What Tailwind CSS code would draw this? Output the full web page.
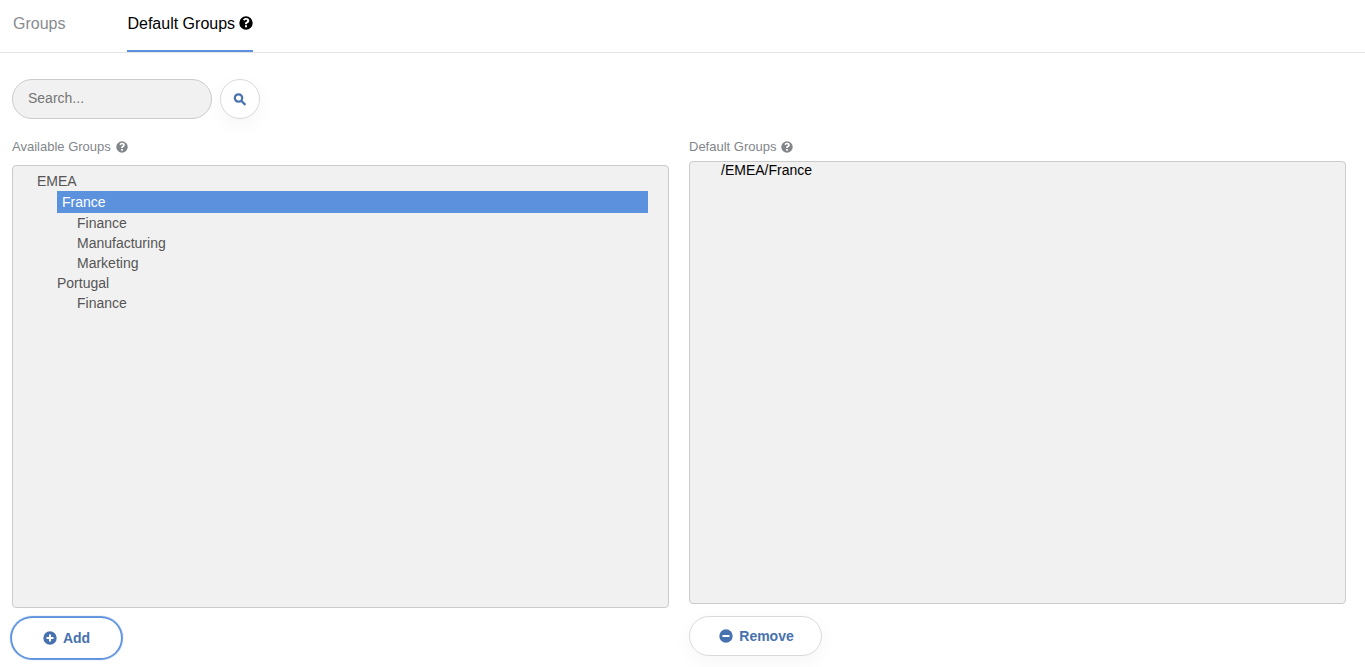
<!DOCTYPE html>
<html lang="en">
<head>
<meta charset="utf-8">
<meta name="viewport" content="width=device-width, initial-scale=1">
<title>Default Groups</title>
<script src="https://cdn.jsdelivr.net/npm/@tailwindcss/browser@4"></script>
</head>
<body class="min-h-screen bg-white font-['Liberation_Sans',Arial,sans-serif] text-sm text-[#555555]">
<svg class="hidden" aria-hidden="true">
  <symbol id="help" viewBox="0 0 14 14"><path fill-rule="evenodd" fill="currentColor" d="M7 .3a6.700 6.700 0 1 0 0 13.400A6.700 6.700 0 0 0 7 .3ZM6 9.300h2v2H6Zm0-1V7.600c0-1 .6-1.400 1.300-1.800.6-.35.9-.6.9-1.050 0-.6-.5-.9-1.150-.9-.75 0-1.150.4-1.600 1L4 3.800C4.700 2.700 5.700 2.100 7.200 2.100c1.700 0 3.100 1.050 3.100 2.650 0 1.300-.8 1.900-1.550 2.350-.5.3-.75.5-.75.9v.3Z"/></symbol>
  <symbol id="plus" viewBox="0 0 14 14"><path fill-rule="evenodd" fill="currentColor" d="M7 .3a6.700 6.700 0 1 0 0 13.400A6.700 6.700 0 0 0 7 .3ZM6 3.500h2V6h2.500v2H8v2.500H6V8H3.500V6H6Z"/></symbol>
  <symbol id="minus" viewBox="0 0 14 14"><path fill-rule="evenodd" fill="currentColor" d="M7 .3a6.700 6.700 0 1 0 0 13.400A6.700 6.700 0 0 0 7 .3ZM3.500 6h7v2h-7Z"/></symbol>
</svg>
<nav class="flex h-[53px] gap-[62px] border-b border-[#e4e4e4] px-[13px] text-base leading-[48px]">
  <a href="#groups" class="text-[#888b90]">Groups</a>
  <a href="#default" aria-current="page" class="flex h-[52px] gap-1 border-b-2 border-[#5b91dd] text-black">Default Groups <svg class="mt-4 size-[14px]" aria-hidden="true"><use href="#help"/></svg></a>
</nav>
<main class="pt-[26px] pr-[19px] pb-2 pl-3">
  <form class="flex gap-2" onsubmit="return false">
    <input type="text" aria-label="Search" placeholder="Search..." class="h-10 w-[200px] rounded-full border border-[#cbcbcb] bg-[#f1f1f1] px-[15px] pb-[2px] placeholder:text-[#757575]">
    <button type="submit" aria-label="Search" class="flex size-10 items-center justify-center rounded-full border border-[#dadada] bg-white text-[#4771af] shadow-[0_6px_20px_rgba(0,0,0,0.04)]">
      <svg class="size-[14px]" viewBox="0 0 14 14" fill="none" stroke="currentColor" stroke-width="2.200" aria-hidden="true"><circle cx="5.500" cy="6" r="3.700"/><path d="M8.200 8.700 12.400 12.900"/></svg>
    </button>
  </form>
  <div class="grid grid-cols-2 gap-5 pt-[18px]">
    <section>
      <h2 id="available" class="flex h-5 items-center gap-[5px] text-[13px] text-[#82868b]">Available Groups <svg class="size-3" aria-hidden="true"><use href="#help"/></svg></h2>
      <div class="mt-2 h-[443px] rounded border border-[#cbcbcb] bg-[#f1f1f1] pt-[5px] pr-5 pl-6">
        <ul role="tree" aria-labelledby="available" class="leading-5">
          <li role="treeitem" aria-expanded="true">EMEA
            <ul role="group" class="pl-5">
              <li role="treeitem" aria-expanded="true" aria-selected="true">
                <div class="h-[22px] bg-[#5b91dd] px-[5px] leading-[22px] text-white">France</div>
                <ul role="group" class="pl-5">
                  <li role="treeitem">Finance</li>
                  <li role="treeitem">Manufacturing</li>
                  <li role="treeitem">Marketing</li>
                </ul>
              </li>
              <li role="treeitem" aria-expanded="true">Portugal
                <ul role="group" class="pl-5">
                  <li role="treeitem">Finance</li>
                </ul>
              </li>
            </ul>
          </li>
        </ul>
      </div>
      <button type="button" class="mt-[10px] flex h-10 w-[109px] items-center justify-center gap-[6px] rounded-full bg-white font-bold text-[#4771af] shadow-[0_0_1px_2px_#5b91dd]"><svg class="size-[14px]" aria-hidden="true"><use href="#plus"/></svg>Add</button>
    </section>
    <section>
      <label for="defaults" class="flex h-5 items-center gap-[5px] text-[13px] text-[#82868b]">Default Groups <svg class="size-3" aria-hidden="true"><use href="#help"/></svg></label>
      <select id="defaults" multiple class="mt-1 block h-[443px] w-full appearance-none overflow-auto rounded border border-[#cbcbcb] bg-[#f1f1f1] text-black">
        <option class="h-[17px] p-0 pl-[31px]">/EMEA/France</option>
      </select>
      <button type="button" class="mt-3 flex h-10 w-[133px] items-center justify-center gap-[6px] rounded-full border border-[#dadada] bg-white pl-[2px] font-bold text-[#4771af] shadow-[0_6px_20px_rgba(0,0,0,0.04)]"><svg class="size-[14px]" aria-hidden="true"><use href="#minus"/></svg>Remove</button>
    </section>
  </div>
</main>
</body>
</html>
